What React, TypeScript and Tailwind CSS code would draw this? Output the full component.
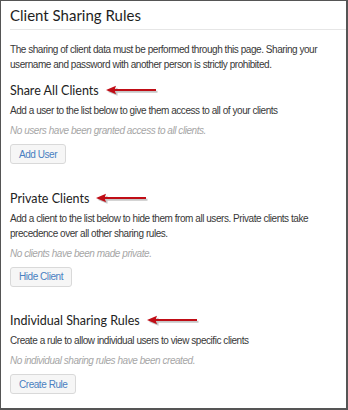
import React from "react";

function Arrow() {
  return (
    <svg width="52" height="12" viewBox="0 0 52 12" className="ml-[7px] shrink-0">
      <g transform="translate(1.5,1.8)" opacity="0.3">
        <line x1="6" y1="5" x2="50" y2="5" stroke="#444" strokeWidth="2" />
        <polygon points="0,5 10,1 10,9" fill="#444" />
      </g>
      <line x1="6" y1="5" x2="50" y2="5" stroke="#c00d16" strokeWidth="2" />
      <polygon points="0,5 10,0.8 8.5,5 10,9.2" fill="#c00d16" />
    </svg>
  );
}

function Section({
  title,
  desc,
  empty,
  button,
}: {
  title: string;
  desc: string;
  empty: string;
  button: string;
}) {
  return (
    <div>
      <div className="flex items-center">
        <h2 className="text-[12.5px] leading-[18px] text-[#222]" style={{ fontFamily: "Lato, sans-serif" }}>
          {title}
        </h2>
        <Arrow />
      </div>
      <p className="mt-[3px] text-[10px] leading-[15px] tracking-[-0.45px] text-[#383838]">{desc}</p>
      <p className="mt-[5px] text-[10px] leading-[15px] tracking-[-0.45px] italic text-[#a6a6a6]">{empty}</p>
      <button className="mt-[6px] h-[20px] px-[8px] rounded-[3px] border border-[#d9d9d9] bg-[#f6f6f6] text-[10px] tracking-[-0.45px] text-[#4a7fc1]">
        {button}
      </button>
    </div>
  );
}

export default function App() {
  return (
    <div
      className="w-[348px] h-[410px] bg-white border-l border-t border-r-2 border-b-2 border-[#555] overflow-hidden"
      style={{ fontFamily: '"Liberation Sans", Arial, sans-serif' }}
    >
      <div className="pl-[9px]">
        <h1 className="pt-[3px] text-[15px] leading-[22px] text-[#1e1e1e]" style={{ fontFamily: "Lato, sans-serif" }}>
          Client Sharing Rules
        </h1>
        <div className="mt-[3px] border-t border-[#e6e6e6]" />
        <p className="mt-[12px] pr-[10px] text-[10px] leading-[15px] tracking-[-0.45px] text-[#383838]">
          The sharing of client data must be performed through this page. Sharing your username and password with another person is strictly prohibited.
        </p>
        <div className="mt-[10px] flex flex-col gap-[25px]">
          <Section
            title="Share All Clients"
            desc="Add a user to the list below to give them access to all of your clients"
            empty="No users have been granted access to all clients."
            button="Add User"
          />
          <Section
            title="Private Clients"
            desc="Add a client to the list below to hide them from all users. Private clients take precedence over all other sharing rules."
            empty="No clients have been made private."
            button="Hide Client"
          />
          <Section
            title="Individual Sharing Rules"
            desc="Create a rule to allow individual users to view specific clients"
            empty="No individual sharing rules have been created."
            button="Create Rule"
          />
        </div>
      </div>
    </div>
  );
}
